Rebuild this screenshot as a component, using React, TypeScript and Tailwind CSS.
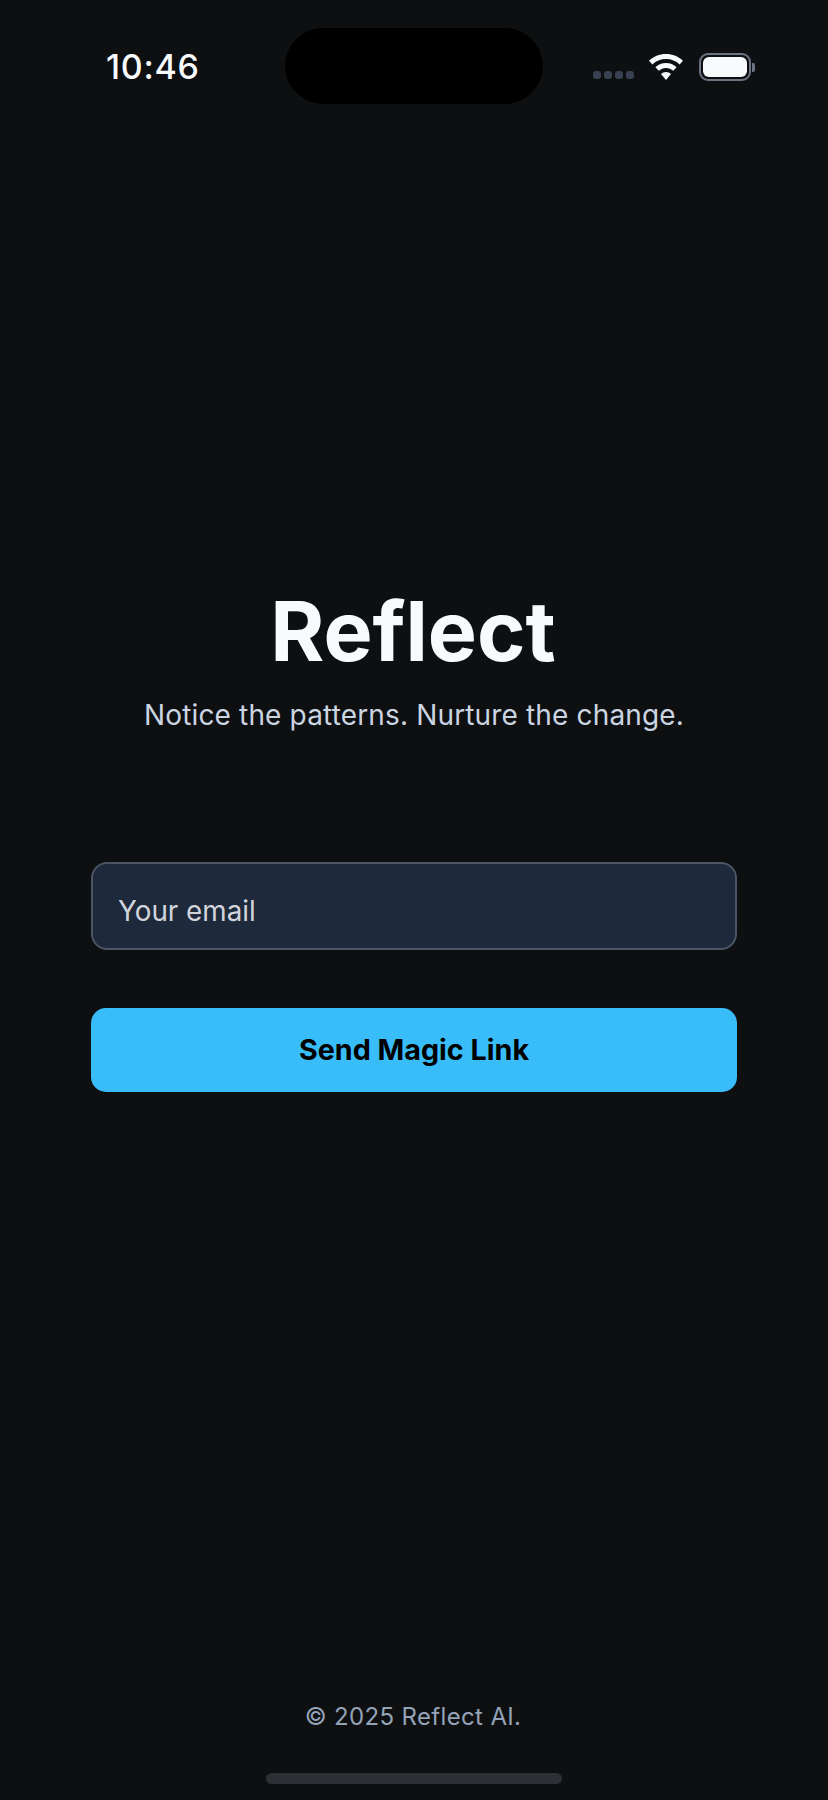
function WifiIcon() {
  return (
    <svg width="36" height="26" viewBox="0 0 36 26" fill="#f8fafc">
      <path d="M18 0C11.4 0 5.400 2.600 1 6.800l3.400 3.600C7.900 7 12.700 5 18 5s10.100 2 13.600 5.400L35 6.800C30.600 2.600 24.600 0 18 0z" />
      <path d="M18 9c-4.100 0-7.800 1.600-10.600 4.200l3.400 3.600c1.900-1.800 4.400-2.900 7.200-2.900s5.300 1.100 7.200 2.900l3.400-3.600C25.800 10.600 22.100 9 18 9z" />
      <path d="M18 18c-2 0-3.700.8-5 2l5 6 5-6c-1.300-1.200-3-2-5-2z" />
    </svg>
  )
}

function StatusBar() {
  return (
    <div className="h-[134px] flex items-start pl-[106px] pr-[73px] pt-[28px]">
      <span className="w-[179px] mt-[21px] text-[34px] leading-[36px] tracking-[0.7px] font-medium text-[#f8fafc]">10:46</span>
      <div className="w-[258px] h-[76px] rounded-[38px] bg-black" />
      <div className="flex-1 flex items-center justify-end mt-[25px]">
        <div className="flex gap-[3px] mt-[16px] mr-[14px]">
          <i className="block w-[8px] h-[8px] rounded-[3px] bg-[#374151]" />
          <i className="block w-[8px] h-[8px] rounded-[3px] bg-[#374151]" />
          <i className="block w-[8px] h-[8px] rounded-[3px] bg-[#374151]" />
          <i className="block w-[8px] h-[8px] rounded-[3px] bg-[#374151]" />
        </div>
        <WifiIcon />
        <div className="ml-[15px] w-[52px] h-[28px] rounded-[9px] border-[2px] border-[#6b7280] p-[2px]">
          <div className="w-full h-full rounded-[6px] bg-[#f8fafc]" />
        </div>
        <div className="ml-[1px] w-[3px] h-[9px] rounded-r-[2px] bg-[#6b7280]" />
      </div>
    </div>
  )
}

export default function App() {
  return (
    <main className="w-[828px] h-[1800px] flex flex-col bg-[#0d0f11] font-['Inter',sans-serif]">
      <StatusBar />
      <div className="flex flex-col items-center px-[91px] pt-[447px]">
        <h1 className="pr-[2px] text-[82.500px] leading-[100px] font-bold text-[#f8fafc]">Reflect</h1>
        <p className="mt-[16px] text-[28px] leading-[36px] tracking-[0.150px] font-normal text-[#cbd5e1]">Notice the patterns. Nurture the change.</p>
        <div className="mt-[129px] w-full h-[88px] flex items-center pl-[25px] pr-[26px] pt-[9px] rounded-[16px] bg-[#1e293b] border-[2px] border-[#4b5563]">
          <span className="text-[27.800px] leading-[36px] font-normal text-[#d1d5db]">Your email</span>
        </div>
        <button className="mt-[58px] w-full h-[84px] rounded-[15px] bg-[#38bdf8] text-[28.700px] font-bold text-black">
          Send Magic Link
        </button>
      </div>
      <div className="mt-auto flex flex-col items-center pb-[16px]">
        <p className="pr-[2px] text-[24px] leading-[30px] tracking-[0.350px] font-normal text-[#94a3b8]">© 2025 Reflect AI.</p>
        <div className="mt-[41px] w-[296px] h-[11px] rounded-full bg-[#2c2f33]" />
      </div>
    </main>
  )
}
